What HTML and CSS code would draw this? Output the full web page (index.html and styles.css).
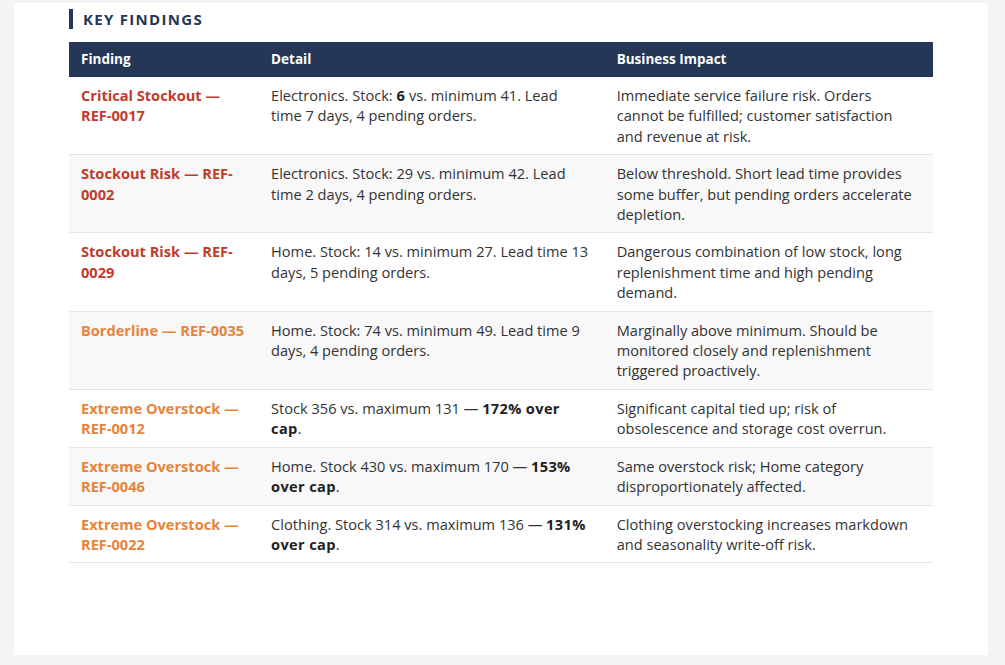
FILE: index.html
```html
<!DOCTYPE html>
<html lang="en">
<head>
<meta charset="utf-8">
<title>Key Findings</title>
<link rel="stylesheet" href="styles.css">
</head>
<body>
<main class="card">
  <h2 class="section-title">Key Findings</h2>
  <table class="findings">
    <colgroup>
      <col class="c1"><col class="c2"><col class="c3">
    </colgroup>
    <thead>
      <tr><th>Finding</th><th>Detail</th><th>Business Impact</th></tr>
    </thead>
    <tbody>
      <tr>
        <td class="f red">Critical Stockout — REF-0017</td>
        <td>Electronics. Stock: <b>6</b> vs. minimum 41. Lead time 7 days, 4 pending orders.</td>
        <td>Immediate service failure risk. Orders cannot be fulfilled; customer satisfaction and revenue at risk.</td>
      </tr>
      <tr>
        <td class="f red">Stockout Risk — REF-0002</td>
        <td>Electronics. Stock: 29 vs. minimum 42. Lead time 2 days, 4 pending orders.</td>
        <td>Below threshold. Short lead time provides some buffer, but pending orders accelerate depletion.</td>
      </tr>
      <tr>
        <td class="f red">Stockout Risk — REF-0029</td>
        <td>Home. Stock: 14 vs. minimum 27. Lead time 13 days, 5 pending orders.</td>
        <td>Dangerous combination of low stock, long replenishment time and high pending demand.</td>
      </tr>
      <tr>
        <td class="f orange">Borderline — REF-0035</td>
        <td>Home. Stock: 74 vs. minimum 49. Lead time 9 days, 4 pending orders.</td>
        <td>Marginally above minimum. Should be monitored closely and replenishment triggered proactively.</td>
      </tr>
      <tr>
        <td class="f orange">Extreme Overstock — REF-0012</td>
        <td>Stock 356 vs. maximum 131 — <b>172% over cap</b>.</td>
        <td>Significant capital tied up; risk of obsolescence and storage cost overrun.</td>
      </tr>
      <tr>
        <td class="f orange">Extreme Overstock — REF-0046</td>
        <td>Home. Stock 430 vs. maximum 170 — <b>153% over cap</b>.</td>
        <td>Same overstock risk; Home category disproportionately affected.</td>
      </tr>
      <tr>
        <td class="f orange">Extreme Overstock — REF-0022</td>
        <td>Clothing. Stock 314 vs. maximum 136 — <b>131% over cap</b>.</td>
        <td>Clothing overstocking increases markdown and seasonality write-off risk.</td>
      </tr>
    </tbody>
  </table>
</main>
</body>
</html>
```

FILE: styles.css
```css
html, body {
  margin: 0;
  padding: 0;
  background: #f4f4f4;
}
body {
  padding: 3px 17px 10px 14px;
  font-family: "Open Sans", "Liberation Sans", sans-serif;
  color: #333333;
}
.card {
  background: #ffffff;
  padding: 6px 55px 92px 55px;
  height: 652px;
  box-sizing: border-box;
}
.section-title {
  margin: 0 0 13px 0;
  border-left: 4px solid #243757;
  padding-left: 10px;
  font-size: 15px;
  line-height: 20px;
  font-weight: 700;
  letter-spacing: 1.3px;
  text-transform: uppercase;
  color: #243757;
}
.findings {
  width: 100%;
  border-collapse: collapse;
  table-layout: fixed;
  font-size: 14.6px;
  line-height: 20.4px;
}
.c1 { width: 22%; }
.c2 { width: 40%; }
.c3 { width: 38%; }
.findings th {
  background: #243757;
  color: #ffffff;
  text-align: left;
  font-weight: 700;
  font-size: 13.5px;
  padding: 7px 12px 7px 12px;
  height: 35px;
  box-sizing: border-box;
}
.findings td {
  vertical-align: top;
  padding: 8px 14px 8px 12px;
  border-bottom: 1px solid #e6e6e6;
}
.findings tbody tr:nth-child(even) td {
  background: #f8f8f8;
}
.findings b {
  font-weight: 700;
  letter-spacing: 0.35px;
  color: #222222;
}
.f { font-weight: 700; }
.red { color: #bf3b2c; }
.orange { color: #e5843a; }
```
